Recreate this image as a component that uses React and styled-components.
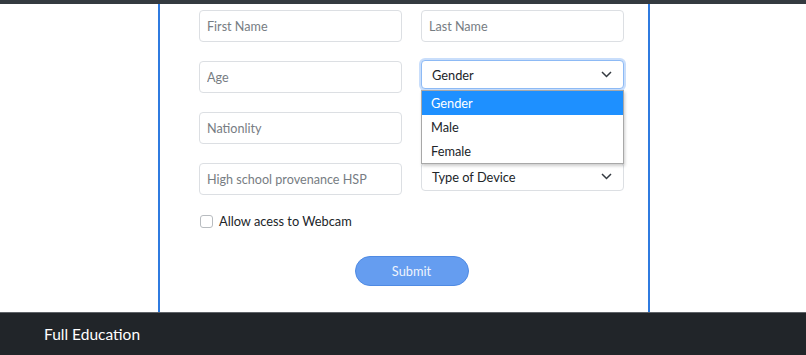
import React from "react";
import styled, { createGlobalStyle } from "styled-components";

const Global = createGlobalStyle`
  body {
    margin: 0;
    background: #fff;
    font-family: Lato, "Noto Sans", sans-serif;
  }
  * { box-sizing: border-box; }
`;

const Page = styled.div`
  display: flex;
  flex-direction: column;
  min-height: 355px;
`;

const TopBar = styled.div`
  height: 4px;
  background: #343a40;
`;

const Frame = styled.main`
  width: 492px;
  margin-left: calc(50% - 245px);
  border-left: 2px solid #2f7be0;
  border-right: 2px solid #2f7be0;
  padding: 6px 24px 0 39px;
  height: 308px;
`;

const Form = styled.form`
  display: flex;
  flex-direction: column;
`;

const Grid = styled.div`
  display: grid;
  grid-template-columns: 203px 203px;
  column-gap: 19px;
  row-gap: 19px;
`;

const Input = styled.input`
  height: 32px;
  width: 100%;
  border: 1px solid #dcdfe3;
  border-radius: 4px;
  padding: 0 7px;
  font-family: inherit;
  font-size: 12.6px;
  color: #212529;
  outline: none;
  &::placeholder {
    color: #777d83;
  }
`;

const SelectWrap = styled.div`
  position: relative;
  height: 32px;
`;

const SelectBox = styled.div`
  height: 29px;
  margin-top: -1px;
  display: flex;
  align-items: center;
  justify-content: space-between;
  padding: 0 11px 0 10px;
  border: 1px solid ${(p) => (p.$focused ? "#8dbaf5" : "#dcdfe3")};
  border-radius: 4px;
  box-shadow: ${(p) => (p.$focused ? "0 0 0 2px #c9defb" : "none")};
  font-size: 12.8px;
  color: #212529;
  background: #fff;
`;

const Menu = styled.ul`
  position: absolute;
  top: 29px;
  left: 0;
  right: 0;
  margin: 0;
  padding: 0;
  list-style: none;
  background: #fff;
  border: 1px solid #a8a8a8;
  box-shadow: 1px 2px 3px rgba(0, 0, 0, 0.2);
  z-index: 2;
`;

const Option = styled.li`
  height: 24px;
  display: flex;
  align-items: center;
  padding: 0 9px;
  font-size: 12.8px;
  color: ${(p) => (p.$active ? "#fff" : "#212529")};
  background: ${(p) => (p.$active ? "#1e90ff" : "#fff")};
`;

const CheckRow = styled.label`
  display: flex;
  align-items: center;
  gap: 6px;
  margin-top: 18px;
  padding-left: 1px;
  font-size: 12.8px;
  color: #212529;
`;

const Box = styled.span`
  width: 13px;
  height: 13px;
  border: 1px solid #b8bcc0;
  border-radius: 3px;
  background: #fff;
`;

const Submit = styled.button`
  align-self: center;
  margin-top: 27px;
  width: 114px;
  height: 30px;
  border-radius: 15px;
  border: 1px solid #4f8ae3;
  background: #659df0;
  color: #eef4fd;
  font-family: inherit;
  font-size: 12.8px;
`;

const Footer = styled.footer`
  height: 43px;
  background: #212529;
  border-top: 1px solid #5f6368;
  display: flex;
  align-items: center;
  padding-left: 44px;
  color: #fff;
  font-size: 15.5px;
`;

const Chevron = () => (
  <svg width="11" height="7" viewBox="0 0 11 7">
    <polyline
      points="1,1 5.5,5.5 10,1"
      fill="none"
      stroke="#343a40"
      strokeWidth="1.5"
    />
  </svg>
);

const Select = ({ value, open, options }) => (
  <SelectWrap>
    <SelectBox $focused={open}>
      <span>{value}</span>
      <Chevron />
    </SelectBox>
    {open && (
      <Menu>
        {options.map((o) => (
          <Option key={o} $active={o === value}>
            {o}
          </Option>
        ))}
      </Menu>
    )}
  </SelectWrap>
);

export default function App() {
  return (
    <Page>
      <Global />
      <TopBar />
      <Frame>
        <Form onSubmit={(e) => e.preventDefault()}>
          <Grid>
            <Input placeholder="First Name" />
            <Input placeholder="Last Name" />
            <Input placeholder="Age" />
            <Select value="Gender" open options={["Gender", "Male", "Female"]} />
            <Input placeholder="Nationlity" />
            <Input placeholder="" />
            <Input placeholder="High school provenance HSP" />
            <Select value="Type of Device" />
          </Grid>
          <CheckRow>
            <Box />
            Allow acess to Webcam
          </CheckRow>
          <Submit type="submit">Submit</Submit>
        </Form>
      </Frame>
      <Footer>Full Education</Footer>
    </Page>
  );
}
